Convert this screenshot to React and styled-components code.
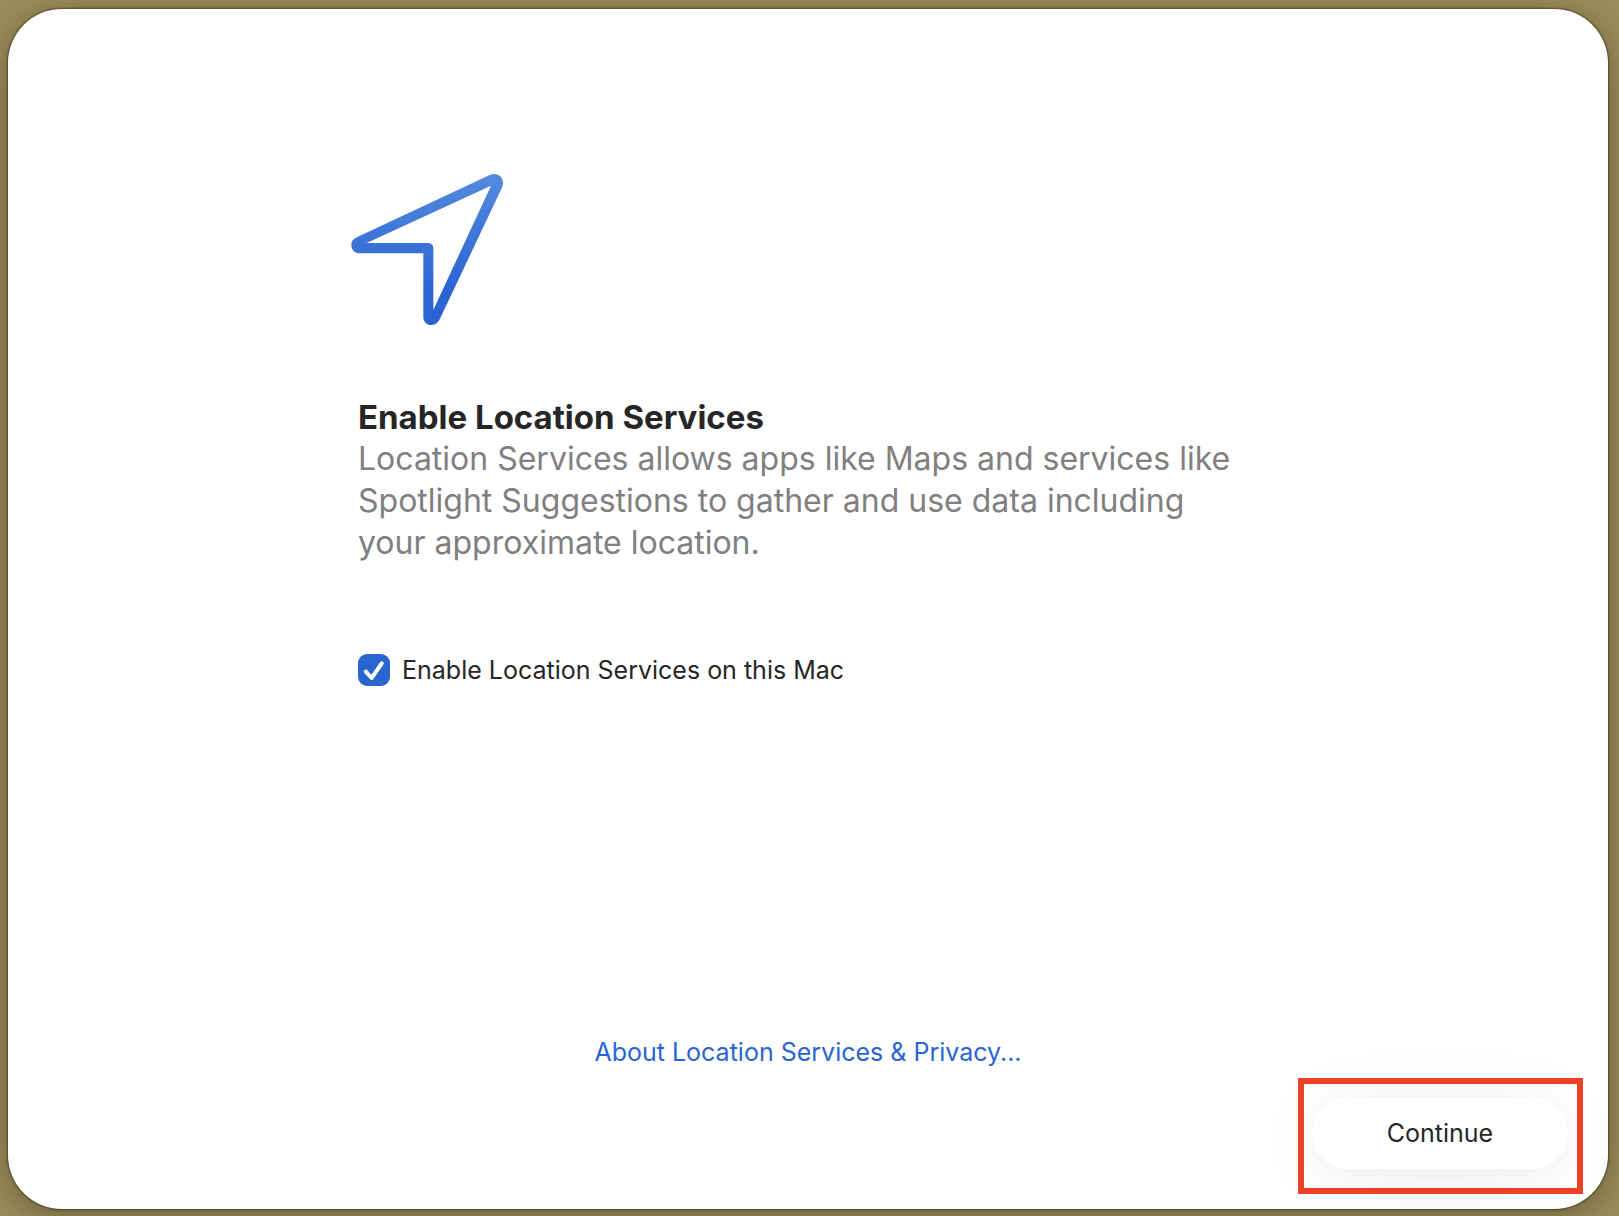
import { useState } from "react";
import styled, { createGlobalStyle } from "styled-components";

const App = () => {
  const [enabled, setEnabled] = useState(true);

  return (
    <Desktop>
      <GlobalStyle />
      <AssistantWindow>
        <Content>
          <LocationIcon />
          <Title>Enable Location Services</Title>
          <Description>
            Location Services allows apps like Maps and services like Spotlight
            Suggestions to gather and use data including your approximate
            location.
          </Description>
          <CheckLabel htmlFor="location">
            <CheckBox>
              <CheckInput
                id="location"
                type="checkbox"
                checked={enabled}
                onChange={(e) => setEnabled(e.target.checked)}
              />
              <CheckMark viewBox="0 0 32 32" aria-hidden="true">
                <path d="M7.8 17.6 L13.6 24 L23.8 9.3" />
              </CheckMark>
            </CheckBox>
            Enable Location Services on this Mac
          </CheckLabel>
        </Content>
        <Footer>
          <PrivacyLink href="#privacy">
            About Location Services &amp; Privacy...
          </PrivacyLink>
          <Highlight>
            <ContinueButton type="button">Continue</ContinueButton>
          </Highlight>
        </Footer>
      </AssistantWindow>
    </Desktop>
  );
};

export default App;

const LocationIcon = () => (
  <Arrow viewBox="30 39 462 459" aria-hidden="true">
    <defs>
      <linearGradient id="arrowBlue" x1="0" y1="0" x2="0" y2="1">
        <stop offset="0" stopColor="#548bde" />
        <stop offset="0.75" stopColor="#2b65d3" />
        <stop offset="1" stopColor="#2963d1" />
      </linearGradient>
    </defs>
    <path
      fill="url(#arrowBlue)"
      fillRule="evenodd"
      d="M250 280 H60 C44 280 34 270 34 255 C34 243 41 236 52 231 L449 45
         C470 36 489 49 489 68 C489 75 487 81 484 87 L302 472
         C296 486 288 495 274 495 C259 495 250 485 250 470 Z
         M80 249 H264 Q280 250 280 266 V450 L453 77 Z"
    />
  </Arrow>
);

const GlobalStyle = createGlobalStyle`
  * {
    box-sizing: border-box;
  }
  body {
    margin: 0;
    background: #9a8c5a;
    font-family: Inter, "Liberation Sans", sans-serif;
    color: #262626;
  }
`;

const Desktop = styled.div`
  min-height: 100vh;
  padding: 9px 11px 7px 8px;
  display: flex;
  overflow: hidden;
`;

const AssistantWindow = styled.main`
  flex: 1;
  display: flex;
  flex-direction: column;
  justify-content: space-between;
  overflow: hidden;
  background: #fff;
  border-radius: 54px;
  box-shadow: 0 0 2px 1px rgba(40, 30, 0, 0.55), 0 8px 36px rgba(0, 0, 0, 0.3);
`;

const Content = styled.section`
  width: 100%;
  max-width: 900px;
  margin: 0 auto;
  padding-top: 164px;
`;

const Arrow = styled.svg`
  display: block;
  width: 154px;
  height: 153px;
  margin: 0 0 70px -8px;
`;

const Title = styled.h1`
  margin: 0;
  font-size: 33px;
  line-height: 42px;
  font-weight: 700;
`;

const Description = styled.p`
  margin: 0 0 90px;
  max-width: 880px;
  font-size: 32px;
  line-height: 42px;
  color: #808080;
`;

const CheckLabel = styled.label`
  display: flex;
  align-items: center;
  gap: 12px;
  font-size: 25px;
  line-height: 32px;
`;

const CheckBox = styled.span`
  display: grid;
  width: 32px;
  height: 32px;
`;

const CheckInput = styled.input`
  appearance: none;
  grid-area: 1 / 1;
  width: 32px;
  height: 32px;
  margin: 0;
  border-radius: 9px;
  border: 1px solid #c4c4c4;
  &:checked {
    border: none;
    background: #2965d1;
  }
`;

const CheckMark = styled.svg`
  grid-area: 1 / 1;
  pointer-events: none;
  fill: none;
  stroke: #fff;
  stroke-width: 4;
  stroke-linecap: round;
  stroke-linejoin: round;
`;

const Footer = styled.footer`
  display: flex;
  flex-direction: column;
  align-items: center;
  gap: 29px;
  padding: 0 40px 40px;
`;

const PrivacyLink = styled.a`
  font-size: 25px;
  line-height: 32px;
  color: #2965d1;
  text-decoration: none;
`;

const Highlight = styled.div`
  position: relative;
  align-self: flex-end;
  /* red frame drawn over the button and its shadow */
  &::after {
    content: "";
    position: absolute;
    inset: -19px -15px -25px -14px;
    border: 6px solid #ed4226;
    pointer-events: none;
  }
`;

const ContinueButton = styled.button`
  display: block;
  width: 256px;
  height: 72px;
  border: none;
  border-radius: 36px;
  background: #fff;
  box-shadow: 0 6px 20px rgba(0, 0, 0, 0.02), 0 6px 72px rgba(0, 0, 0, 0.07);
  font-family: inherit;
  font-size: 25px;
  color: #262626;
`;
